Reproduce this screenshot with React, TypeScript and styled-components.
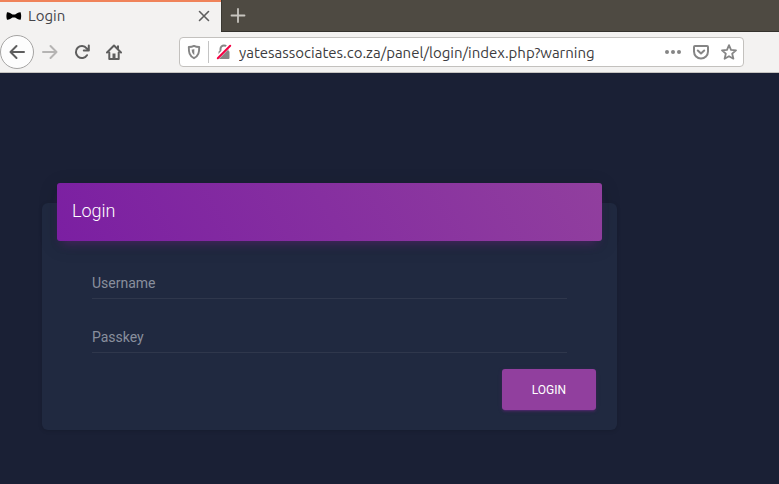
import React from "react";
import styled, { createGlobalStyle } from "styled-components";

const GlobalStyle = createGlobalStyle`
  *, *::before, *::after { box-sizing: border-box; }
  html, body { margin: 0; background: #1a2035; }
  button, input { font: inherit; }
`;

const uiFont = `"Ubuntu", "Noto Sans", sans-serif`;

const Browser = styled.div`
  display: flex;
  flex-direction: column;
  min-height: 100vh;
  font-family: ${uiFont};
`;

const TabStrip = styled.div`
  display: flex;
  height: 32px;
  background: #4e4a42;
  border-bottom: 1px solid #34322d;
`;

const Tab = styled.div`
  display: flex;
  align-items: center;
  flex: 0 0 221px;
  height: 32px;
  padding: 0 9px 2px 6px;
  gap: 6px;
  background: #f3f2f1;
  border-top: 2px solid #f0835a;
`;

const TabTitle = styled.span`
  flex: 1;
  font-size: 15px;
  line-height: 20px;
  color: #45454a;
`;

const IconButton = styled.button<{ $width?: number }>`
  display: flex;
  align-items: center;
  justify-content: center;
  flex: none;
  width: ${({ $width = 32 }) => $width}px;
  padding: 0;
  border: 0;
  background: none;
  color: #5e5e5e;

  &:disabled { color: #b5b4b3; }
`;

const NewTabButton = styled(IconButton)`
  color: #c8c5bf;
  border-left: 1px solid #3b3933;
`;

const NavBar = styled.div`
  display: flex;
  align-items: center;
  height: 41px;
  padding-right: 35px;
  background: #f3f2f1;
  border-bottom: 1px solid #c6c4c1;
`;

const BackButton = styled(IconButton)`
  height: 34px;
  border: 1px solid #a5a4a3;
  border-radius: 50%;
  background: #fdfdfd;
`;

const AddressBar = styled.div`
  display: flex;
  align-items: center;
  flex: 1;
  min-width: 0;
  height: 30px;
  margin-left: 49px;
  padding: 0 0 0 2px;
  background: #fff;
  border: 1px solid #c3c1be;
  border-radius: 4px;
`;

const Divider = styled.span`
  width: 1px;
  height: 22px;
  margin-left: 2px;
  background: #c4c4c4;
`;

const AddressInput = styled.input`
  flex: 1;
  min-width: 0;
  height: 24px;
  padding: 0;
  border: 0;
  outline: 0;
  background: none;
  font-size: 15px;
  color: #3c3c40;
`;

const Page = styled.main`
  flex: 1;
  padding: 130px 42px 40px;
  background: #1a2035;
  font-family: Roboto, "Liberation Sans", sans-serif;
`;

const Card = styled.form`
  display: flex;
  flex-direction: column;
  max-width: 575px;
  padding: 0 15px 20px;
  background: #202940;
  border-radius: 6px;
  box-shadow: 0 1px 4px rgba(0, 0, 0, 0.14);
`;

const CardHeader = styled.header`
  margin-top: -20px;
  padding: 14px 15px 16px;
  border-radius: 3px;
  background: linear-gradient(60deg, #7b1fa2, #913f9e);
  box-shadow: 0 4px 20px 0 rgba(0, 0, 0, 0.14),
    0 7px 10px -5px rgba(156, 39, 176, 0.4);
`;

const CardTitle = styled.h4`
  margin: 0;
  font-size: 18px;
  font-weight: 300;
  line-height: 28px;
  color: #fff;
`;

const Fields = styled.div`
  display: flex;
  flex-direction: column;
  gap: 18px;
  padding: 22px 35px 0;
`;

const Field = styled.input`
  width: 100%;
  height: 36px;
  padding: 8px 0 4px;
  border: 0;
  border-bottom: 1px solid #2f374c;
  outline: 0;
  background: none;
  font-size: 14px;
  color: #fff;

  &::placeholder { color: #898f9d; opacity: 1; }
`;

const SubmitButton = styled.button`
  align-self: flex-end;
  margin: 16px 6px 0 0;
  padding: 13px 30px 11px;
  border: 0;
  border-radius: 3px;
  background: #913f9e;
  color: #fff;
  font-size: 12px;
  line-height: 17px;
  text-transform: uppercase;
  box-shadow: 0 2px 2px 0 rgba(156, 39, 176, 0.14),
    0 3px 1px -2px rgba(156, 39, 176, 0.2),
    0 1px 5px 0 rgba(156, 39, 176, 0.12);
`;

const Icon = ({ size = 16, children }: { size?: number; children: React.ReactNode }) => (
  <svg
    width={size}
    height={size}
    viewBox="0 0 16 16"
    fill="none"
    stroke="currentColor"
    strokeWidth="2"
    strokeLinecap="round"
    strokeLinejoin="round"
    aria-hidden="true"
  >
    {children}
  </svg>
);

export default function App() {
  return (
    <Browser>
      <GlobalStyle />
      <TabStrip>
        <Tab>
          <Icon>
            <path
              d="M1 4.200C3.200 4 4.800 5.600 6.500 6.400h2.600c1.700-.8 3.400-2.400 5.500-2.200.8 2.500.8 5.100 0 7.600-2.100.2-3.800-1.400-5.500-2.200H6.500c-1.700.8-3.300 2.400-5.500 2.200-.8-2.500-.8-5.100 0-7.600z"
              fill="#000"
              stroke="none"
            />
          </Icon>
          <TabTitle>Login</TabTitle>
          <IconButton $width={16} aria-label="Close tab">
            <Icon><path d="M3.500 3.500l9 9M12.500 3.500l-9 9" strokeWidth="1.600" /></Icon>
          </IconButton>
        </Tab>
        <NewTabButton aria-label="New tab">
          <Icon><path d="M8 1v13M1.500 7.500h13" strokeWidth="1.800" /></Icon>
        </NewTabButton>
      </TabStrip>
      <NavBar>
        <BackButton $width={34} aria-label="Back">
          <Icon><path d="M15 8H1.500M7.500 2L1.500 8l6 6" /></Icon>
        </BackButton>
        <IconButton disabled aria-label="Forward">
          <Icon><path d="M1 8h13.500M8.500 2l6 6-6 6" /></Icon>
        </IconButton>
        <IconButton aria-label="Reload">
          <Icon>
            <path d="M13 11.200A6 6 0 1 1 12.600 4.300L14.200 6" />
            <path d="M14.800 1.500v5H9.800" />
          </Icon>
        </IconButton>
        <IconButton aria-label="Home">
          <Icon>
            <path d="M1 8.500L8 1.500l7 7M3.300 8.500V15h9.400V8.500" />
            <path d="M11 1.500h2v4l-2-2z" fill="currentColor" stroke="none" />
            <path d="M6.500 14.500V9.500h3v5z" fill="currentColor" stroke="none" />
          </Icon>
        </IconButton>
        <AddressBar>
          <IconButton $width={24} aria-label="Tracking protection">
            <Icon>
              <g stroke="#858585">
                <path d="M8 1.900c1.700.9 3.500 1.100 5.200 1.100 0 5.200-.4 8.700-5.200 11.200C3.200 11.700 2.800 8.200 2.800 3 4.500 3 6.300 2.800 8 1.900z" strokeWidth="1.900" />
                <path d="M8.300 4.900C7.300 5.300 6.700 5.400 5.700 5.500c.1 2.500.6 4.200 2.600 5.600z" fill="#858585" stroke="none" />
              </g>
            </Icon>
          </IconButton>
          <Divider />
          <IconButton $width={30} aria-label="Connection is not secure">
            <Icon>
              <path d="M4.500 7V5a3.500 3.500 0 0 1 7 0v2" stroke="#858585" />
              <rect x="2.500" y="7" width="11" height="8" rx="1" fill="#858585" stroke="none" />
              <path d="M1.200 13.800L13.400 1.600" stroke="#fff" strokeWidth="4" strokeLinecap="butt" />
              <path d="M1.800 14.200L14.200 1.800" stroke="#f40044" strokeWidth="2" />
            </Icon>
          </IconButton>
          <AddressInput
            aria-label="Address"
            defaultValue="yatesassociates.co.za/panel/login/index.php?warning"
          />
          <IconButton $width={28} aria-label="Page actions">
            <Icon>
              <g fill="#858585" stroke="none">
                <circle cx="2" cy="8" r="2" />
                <circle cx="8" cy="8" r="2" />
                <circle cx="14" cy="8" r="2" />
              </g>
            </Icon>
          </IconButton>
          <IconButton $width={28} aria-label="Save to Pocket">
            <Icon>
              <g stroke="#858585">
                <path d="M2 2h12c.6 0 1 .4 1 1v4.500a7 7 0 0 1-14 0V3c0-.6.4-1 1-1z" />
                <path d="M4.800 6.500L8 9.500l3.200-3" />
              </g>
            </Icon>
          </IconButton>
          <IconButton $width={28} aria-label="Bookmark this page">
            <Icon>
              <path
                d="M8 1.200l2 4.600 5 .5-3.800 3.400 1.200 5L8 12.200l-4.400 2.500 1.200-5L1 6.300l5-.5z"
                stroke="#858585"
                strokeWidth="1.800"
              />
            </Icon>
          </IconButton>
        </AddressBar>
      </NavBar>
      <Page>
        <Card onSubmit={(event) => event.preventDefault()}>
          <CardHeader>
            <CardTitle>Login</CardTitle>
          </CardHeader>
          <Fields>
            <Field type="text" aria-label="Username" placeholder="Username" />
            <Field type="password" aria-label="Passkey" placeholder="Passkey" />
          </Fields>
          <SubmitButton type="submit">Login</SubmitButton>
        </Card>
      </Page>
    </Browser>
  );
}
